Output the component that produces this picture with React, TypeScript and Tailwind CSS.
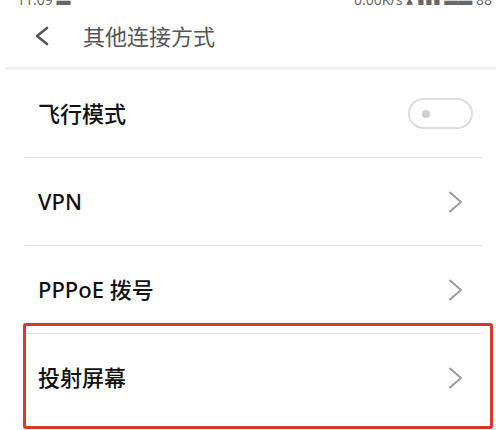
import React from "react";

const font = { fontFamily: '"Noto Sans", "Noto Sans CJK SC", sans-serif' };

function Chevron() {
  return (
    <svg width="16" height="22" viewBox="0 0 16 22" fill="none">
      <path d="M2 1.5 L13 11 L2 20.5" stroke="#9a9a9a" strokeWidth="1.8" strokeLinecap="round" strokeLinejoin="round" />
    </svg>
  );
}

function Toggle() {
  return (
    <div className="w-[65px] h-[31px] rounded-full border-2 border-[#dcdcdc] flex items-center pl-[12px]">
      <div className="w-[8px] h-[8px] rounded-full bg-[#cfcfcf]" />
    </div>
  );
}

function Row({ label, right, pr }: { label: string; right: React.ReactNode; pr: string }) {
  return (
    <div className={`h-[87px] flex items-center justify-between pl-[38px] ${pr}`}>
      <span className="text-[22px] font-medium text-[#111]">{label}</span>
      {right}
    </div>
  );
}

function Divider() {
  return <div className="h-px bg-[#e6e6e6] ml-[25px] mr-[14px]" />;
}

export default function App() {
  return (
    <div className="relative w-[496px] h-[430px] bg-white overflow-hidden" style={font}>
      {/* status bar, cut off at the top */}
      <div className="h-[5px] overflow-hidden flex items-end justify-between pl-[17px] pr-[4px] text-[14px] leading-none text-[#666]">
        <span className="-mb-[2px]">11:09 ▬</span>
        <span className="-mb-[2px]">0.00K/s ▴ ▮▮▮ ▬▬ 88</span>
      </div>

      {/* header */}
      <div className="h-[62px] flex items-center pl-[34px]">
        <svg width="16" height="20" viewBox="0 0 16 20" fill="none">
          <path d="M13 2 L3 10 L13 18" stroke="#555" strokeWidth="2.6" strokeLinecap="round" strokeLinejoin="round" />
        </svg>
        <span className="ml-[33px] text-[22px] text-[#555]">其他连接方式</span>
      </div>
      <div className="h-[3px] bg-[#f1f1f1] ml-[5px]" />

      <Row label="飞行模式" right={<Toggle />} pr="pr-[23px]" />
      <Divider />
      <Row label="VPN" right={<Chevron />} pr="pr-[32px]" />
      <Divider />
      <Row label="PPPoE 拨号" right={<Chevron />} pr="pr-[32px]" />
      <Divider />
      <Row label="投射屏幕" right={<Chevron />} pr="pr-[32px]" />

      {/* red annotation box */}
      <div className="absolute left-[23px] top-[323px] w-[470px] h-[106px] border-[3px] border-[#d33a2c] rounded-[3px]" />
    </div>
  );
}
